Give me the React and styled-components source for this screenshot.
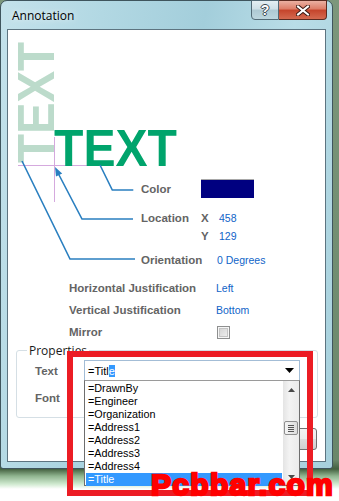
import React from 'react';
import styled, { createGlobalStyle } from 'styled-components';

const Global = createGlobalStyle`
  html, body { margin: 0; padding: 0; background: #fff; }
  body { font-family: "Liberation Sans", Arial, sans-serif; }
  #root { width: 339px; height: 501px; overflow: hidden; }
`;

const Desktop = styled.div`
  position: relative;
  width: 339px;
  height: 501px;
  overflow: hidden;
  background: linear-gradient(to bottom, #7c977c 0px, #6a876a 460px, #43603f 469px, #8fb48f 476px, #cfe9cf 484px, #ffffff 489px);
`;

const Window = styled.div`
  width: 333px;
  height: 469px;
  box-sizing: border-box;
  border: 1px solid #3f555d;
  border-radius: 7px 7px 3px 3px;
  background: linear-gradient(100deg, #c4e2eb 0%, #b2d8e3 25%, #a3cedb 50%, #b9dde7 72%, #a6d0dc 100%);
  display: flex;
  flex-direction: column;
`;

const TitleBar = styled.div`
  height: 28px;
  display: flex;
  align-items: flex-start;
  padding-left: 11px;
`;

const TitleText = styled.span`
  font-family: "Open Sans", "Liberation Sans", sans-serif;
  font-size: 12px;
  line-height: 30px;
  color: #000;
  text-shadow: 0 0 6px rgba(255, 255, 255, 0.9);
`;

const CaptionButtons = styled.div`
  margin-left: auto;
  margin-right: 5px;
  margin-top: -1px;
  display: flex;
`;

const HelpButton = styled.div`
  width: 28px;
  height: 20px;
  box-sizing: border-box;
  border: 1px solid #526a76;
  border-radius: 0 0 0 4px;
  background: linear-gradient(#e4eff3 0%, #cfe0e7 45%, #aec9d3 50%, #bcd6df 100%);
  display: flex;
  align-items: center;
  justify-content: center;
  font-family: "Liberation Sans", Arial, sans-serif;
  font-weight: bold;
  font-size: 14px;
  color: #fff;
  text-shadow: 1px 0 0 #3d4a52, -1px 0 0 #3d4a52, 0 1px 0 #3d4a52, 0 -1px 0 #3d4a52;
`;

const CloseButton = styled.div`
  width: 48px;
  height: 20px;
  box-sizing: border-box;
  border: 1px solid #5b2b21;
  border-left: none;
  border-radius: 0 0 4px 0;
  background: linear-gradient(#eab0a2 0%, #dc7c66 45%, #c5442b 50%, #d46a50 100%);
  display: flex;
  align-items: center;
  justify-content: center;
`;

const Client = styled.div`
  flex: 1;
  margin: 0 6px 6px 6px;
  border: 1px solid #5d7480;
  background: #fff;
  display: flex;
  flex-direction: column;
`;

const Preview = styled.div`
  display: grid;
  height: 240px;
  & > * { grid-area: 1 / 1; }
`;

const Callouts = styled.div`
  padding: 149px 0 0 133px;
  display: flex;
  flex-direction: column;
`;

const CalloutRow = styled.div`
  display: grid;
  grid-template-columns: 60px auto;
  align-items: center;
  height: ${p => p.$h}px;
  margin-top: ${p => p.$mt}px;
`;

const Label = styled.span`
  font-family: "Liberation Sans", Arial, sans-serif;
  font-weight: bold;
  font-size: 11.5px;
  color: #646464;
  white-space: nowrap;
`;

const Value = styled.span`
  font-family: "Liberation Sans", Arial, sans-serif;
  font-size: 10.5px;
  color: #1064c8;
  padding-left: ${p => p.$indent || 0}px;
  white-space: nowrap;
`;

const Swatch = styled.div`
  width: 53px;
  height: 19px;
  box-sizing: border-box;
  background: #000080;
  border-top: 1px solid #a8a8a8;
`;

const Coord = styled.div`
  display: grid;
  grid-template-columns: 18px auto;
  align-items: center;
`;

const Fields = styled.div`
  padding: 7px 0 0 61px;
  display: flex;
  flex-direction: column;
`;

const FieldRow = styled.div`
  display: grid;
  grid-template-columns: 147px auto;
  align-items: center;
  height: 22px;
`;

const Check = styled.span`
  display: block;
  width: 13px;
  height: 13px;
  box-sizing: border-box;
  margin-left: 1px;
  border: 1px solid #8e8f8f;
  background: linear-gradient(135deg, #cfcfcf, #f3f3f3);
  box-shadow: inset 0 0 0 1px #f6f6f6, inset 0 0 0 2px #c4c4c4;
`;

const GroupBox = styled.div`
  margin: 7px 7px 0 8px;
  border: 1px solid #d5dfe5;
  border-radius: 3px;
  padding: 0 16px 9px 18px;
  display: flex;
  flex-direction: column;
`;

const Legend = styled.span`
  align-self: flex-start;
  margin: -8px 0 0 -8px;
  padding: 0 2px;
  background: #fff;
  font-family: "Open Sans", "Liberation Sans", sans-serif;
  font-size: 12px;
  line-height: 15px;
  color: #1a1a1a;
`;

const PropRow = styled.div`
  display: grid;
  grid-template-columns: 49px 216px;
  align-items: center;
  height: 21px;
  margin-top: ${p => p.$mt}px;
`;

const Combo = styled.div`
  position: relative;
  height: 21px;
  box-sizing: border-box;
  border: 1px solid #a3bdd6;
  display: flex;
  align-items: center;
  padding: 0 5px 0 3px;
  font-family: "Liberation Sans", Arial, sans-serif;
  font-size: 11px;
  color: #000;
`;

const Selected = styled.span`
  background: #3399ff;
  color: #fff;
`;

const ComboArrow = styled.svg`
  margin-left: auto;
`;

const DropList = styled.div`
  position: absolute;
  top: 100%;
  left: -1px;
  width: 216px;
  height: 106px;
  box-sizing: border-box;
  border: 1px solid #6e6e6e;
  border-top-color: #9a9a9a;
  background: #fff;
  display: flex;
  z-index: 5;
`;

const Items = styled.div`
  flex: 1;
  padding: 1px 1px 0 1px;
`;

const Item = styled.div`
  height: 13px;
  line-height: 13px;
  padding-left: 2px;
  font-family: "Liberation Sans", Arial, sans-serif;
  font-size: 10.8px;
  color: ${p => (p.$active ? '#fff' : '#000')};
  background: ${p => (p.$active ? '#3399ff' : 'transparent')};
`;

const ScrollBar = styled.div`
  width: 16px;
  background: linear-gradient(to right, #e4e4e4, #f3f3f3 40%, #ebebeb);
  display: flex;
  flex-direction: column;
  align-items: center;
`;

const ScrollArrow = styled.div`
  height: 17px;
  display: flex;
  align-items: center;
  justify-content: center;
  margin-top: ${p => (p.$bottom ? 'auto' : '0')};
`;

const Thumb = styled.div`
  margin-top: 23px;
  width: 14px;
  height: 14px;
  box-sizing: border-box;
  border: 1px solid #8f8f8f;
  border-radius: 2px;
  background: linear-gradient(to right, #f5f5f5, #dcdcdc);
  display: flex;
  flex-direction: column;
  align-items: center;
  justify-content: center;
  gap: 1px;
`;

const Grip = styled.span`
  display: block;
  width: 6px;
  height: 1px;
  background: #555;
`;

const ButtonRow = styled.div`
  display: flex;
  justify-content: flex-end;
  gap: 8px;
  margin-top: 10px;
  padding-right: 8px;
`;

const DlgButton = styled.div`
  width: 75px;
  height: 22px;
  box-sizing: border-box;
  border: 1px solid #707070;
  border-radius: 3px;
  background: linear-gradient(#f2f2f2 0%, #ebebeb 49%, #dddddd 50%, #cfcfcf 100%);
  font-family: "Open Sans", sans-serif;
  font-size: 12px;
  display: flex;
  align-items: center;
  justify-content: center;
`;

const Frame = styled.div`
  position: absolute;
  left: 67px;
  top: 351px;
  width: 246px;
  height: 145px;
  box-sizing: border-box;
  border: 6px solid #ec1c24;
  z-index: 10;
  pointer-events: none;
`;

const Watermark = styled.div`
  position: absolute;
  left: 151px;
  top: 470px;
  z-index: 11;
  font-family: "Liberation Sans", Arial, sans-serif;
  font-weight: bold;
  font-size: 30px;
  line-height: 30px;
  letter-spacing: 1.3px;
  color: #ff0000;
  -webkit-text-stroke: 2.4px #ff0000;
  white-space: nowrap;
`;

const BLUE = '#2a7fc0';
const PINK = '#d5a9de';

function Diagram() {
  return (
    <svg width="317" height="240" viewBox="0 0 317 240">
      <line x1="10" y1="135.5" x2="83" y2="135.5" stroke={PINK} strokeWidth="1" />
      <line x1="46.5" y1="107" x2="46.5" y2="172" stroke={PINK} strokeWidth="1" />
      <text
        transform="translate(46 133) rotate(-90)"
        fontFamily="Liberation Sans, Arial, sans-serif"
        fontWeight="bold"
        fontSize="51"
        textLength="121"
        lengthAdjust="spacingAndGlyphs"
        fill="#bcdbcb"
      >
        TEXT
      </text>
      <text
        x="46"
        y="136"
        fontFamily="Liberation Sans, Arial, sans-serif"
        fontWeight="bold"
        fontSize="51"
        textLength="123"
        lengthAdjust="spacingAndGlyphs"
        fill="#00a46c"
      >
        TEXT
      </text>
      <polyline points="92,135 104.3,160 125.3,160" fill="none" stroke={BLUE} strokeWidth="1.6" />
      <polyline points="50,143 74,189 125,189" fill="none" stroke={BLUE} strokeWidth="1.6" />
      <polygon points="47,137 48,146.6 54.2,143.4" fill={BLUE} />
      <polyline points="14,131 62,229 127,229" fill="none" stroke={BLUE} strokeWidth="1.6" />
    </svg>
  );
}

const listItems = ['=DrawnBy', '=Engineer', '=Organization', '=Address1', '=Address2', '=Address3', '=Address4', '=Title'];

export default function App() {
  return (
    <>
      <Global />
      <Desktop>
        <Window>
          <TitleBar>
            <TitleText>Annotation</TitleText>
            <CaptionButtons>
              <HelpButton>?</HelpButton>
              <CloseButton>
                <svg width="14" height="11" viewBox="0 0 14 11">
                  <path d="M2 1.5 L12 9.5 M12 1.5 L2 9.5" stroke="#3a1a14" strokeWidth="4" strokeLinecap="square" />
                  <path d="M2 1.5 L12 9.5 M12 1.5 L2 9.5" stroke="#ffffff" strokeWidth="2" strokeLinecap="square" />
                </svg>
              </CloseButton>
            </CaptionButtons>
          </TitleBar>
          <Client>
            <Preview>
              <Diagram />
              <Callouts>
                <CalloutRow $h={19} $mt={0}>
                  <Label>Color</Label>
                  <Swatch />
                </CalloutRow>
                <CalloutRow $h={18} $mt={11}>
                  <Label>Location</Label>
                  <Coord>
                    <Label>X</Label>
                    <Value>458</Value>
                  </Coord>
                </CalloutRow>
                <CalloutRow $h={18} $mt={0}>
                  <span />
                  <Coord>
                    <Label>Y</Label>
                    <Value>129</Value>
                  </Coord>
                </CalloutRow>
                <CalloutRow $h={18} $mt={6}>
                  <Label>Orientation</Label>
                  <Value $indent={16}>0 Degrees</Value>
                </CalloutRow>
              </Callouts>
            </Preview>
            <Fields>
              <FieldRow>
                <Label>Horizontal Justification</Label>
                <Value>Left</Value>
              </FieldRow>
              <FieldRow>
                <Label>Vertical Justification</Label>
                <Value>Bottom</Value>
              </FieldRow>
              <FieldRow>
                <Label>Mirror</Label>
                <Check />
              </FieldRow>
            </Fields>
            <GroupBox>
              <Legend>Properties</Legend>
              <PropRow $mt={2}>
                <Label>Text</Label>
                <Combo>
                  <span>=Titl</span>
                  <Selected>e</Selected>
                  <ComboArrow width="9" height="5" viewBox="0 0 9 5">
                    <path d="M0 0 L9 0 L4.5 5 Z" fill="#000" />
                  </ComboArrow>
                  <DropList>
                    <Items>
                      {listItems.map((t, i) => (
                        <Item key={t} $active={i === listItems.length - 1}>{t}</Item>
                      ))}
                    </Items>
                    <ScrollBar>
                      <ScrollArrow>
                        <svg width="7" height="4" viewBox="0 0 7 4"><path d="M0 4 L7 4 L3.5 0 Z" fill="#4a4a4a" /></svg>
                      </ScrollArrow>
                      <Thumb>
                        <Grip />
                        <Grip />
                        <Grip />
                        <Grip />
                      </Thumb>
                      <ScrollArrow $bottom>
                        <svg width="7" height="4" viewBox="0 0 7 4"><path d="M0 0 L7 0 L3.5 4 Z" fill="#4a4a4a" /></svg>
                      </ScrollArrow>
                    </ScrollBar>
                  </DropList>
                </Combo>
              </PropRow>
              <PropRow $mt={6}>
                <Label>Font</Label>
                <span />
              </PropRow>
            </GroupBox>
            <ButtonRow>
              <DlgButton>OK</DlgButton>
              <DlgButton>Cancel</DlgButton>
            </ButtonRow>
          </Client>
        </Window>
        <Frame />
        <Watermark>Pcbbar.com</Watermark>
      </Desktop>
    </>
  );
}
